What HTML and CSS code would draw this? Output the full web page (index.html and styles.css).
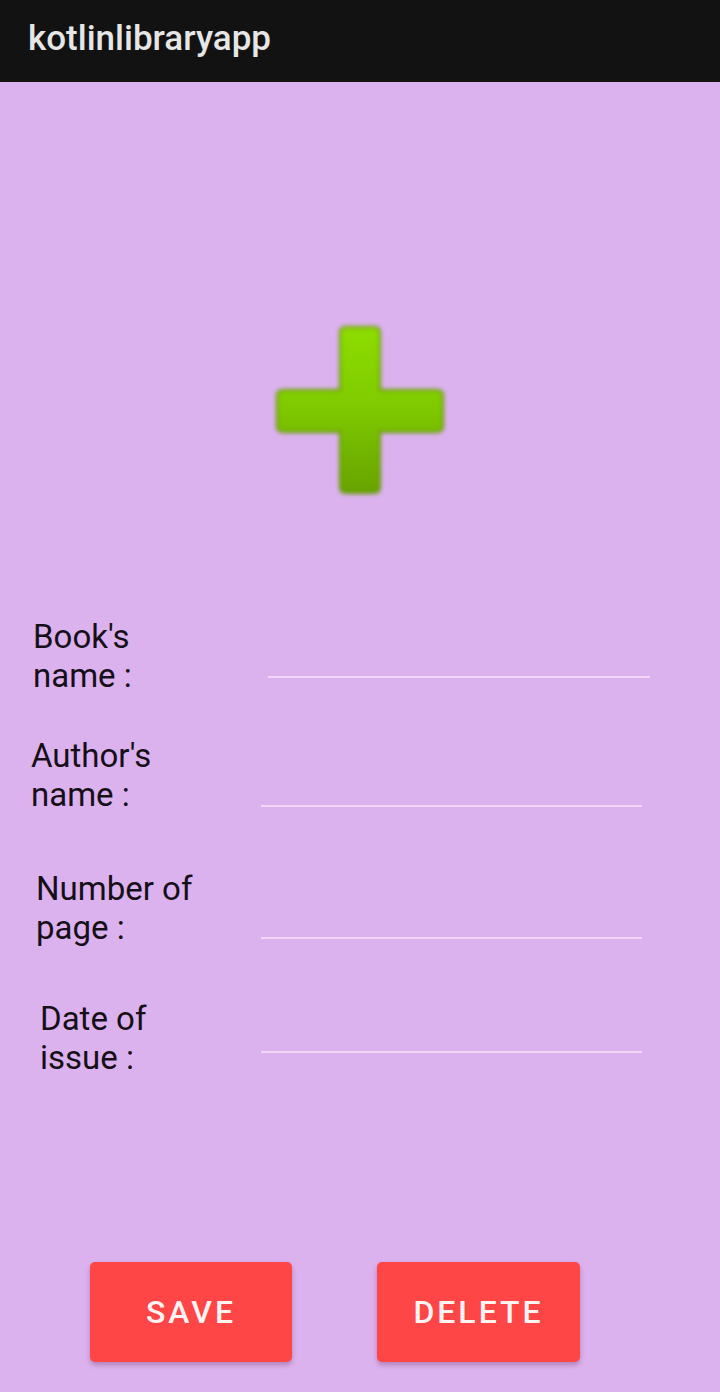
FILE: index.html
```html
<!DOCTYPE html>
<html lang="en">
<head>
<meta charset="utf-8">
<title>kotlinlibraryapp</title>
<link rel="stylesheet" href="styles.css">
</head>
<body>
<header class="appbar">kotlinlibraryapp</header>
<main class="screen">
  <div class="hero">
    <svg class="plus" width="180" height="180" viewBox="0 0 180 180" aria-hidden="true">
      <defs>
        <linearGradient id="g" x1="0" y1="0" x2="0" y2="180" gradientUnits="userSpaceOnUse">
          <stop offset="0" stop-color="#8fde00"/>
          <stop offset="0.45" stop-color="#80cc00"/>
          <stop offset="1" stop-color="#66a000"/>
        </linearGradient>
        <filter id="b" x="-10%" y="-10%" width="120%" height="120%">
          <feGaussianBlur stdDeviation="2.3"/>
        </filter>
      </defs>
      <path filter="url(#b)" fill="url(#g)" stroke="#5f9400" stroke-width="2" d="M76,7 H104 Q110,7 110,13 V70 H167 Q173,70 173,76 V106 Q173,112 167,112 H110 V167 Q110,173 104,173 H76 Q70,173 70,167 V112 H13 Q7,112 7,106 V76 Q7,70 13,70 H70 V13 Q70,7 76,7 Z"/>
    </svg>
  </div>

  <div class="form">
    <div class="row row-book">
      <label class="label">Book's<br>name :</label>
      <div class="field"></div>
    </div>
    <div class="row row-author">
      <label class="label">Author's<br>name :</label>
      <div class="field"></div>
    </div>
    <div class="row row-pages">
      <label class="label">Number of<br>page :</label>
      <div class="field"></div>
    </div>
    <div class="row row-date">
      <label class="label">Date of<br>issue :</label>
      <div class="field"></div>
    </div>
  </div>

  <div class="actions">
    <button class="btn btn-save">SAVE</button>
    <button class="btn btn-delete">DELETE</button>
  </div>
</main>
</body>
</html>
```

FILE: styles.css
```css
* { box-sizing: border-box; }

html, body {
  margin: 0;
  padding: 0;
}

body {
  width: 720px;
  height: 1392px;
  overflow: hidden;
  background: #dcb2ee;
  font-family: Roboto, "Noto Sans", "Liberation Sans", sans-serif;
}

.appbar {
  height: 82px;
  background: #121212;
  color: #e6e6e6;
  font-size: 35px;
  font-weight: 500;
  display: flex;
  align-items: center;
  padding-left: 28px;
  padding-bottom: 6px;
}

.screen {
  height: 1310px;
  display: flex;
  flex-direction: column;
}

.hero {
  display: flex;
  justify-content: center;
  padding-top: 238px;
}

.plus {
  display: block;
}

.form {
  margin-top: 117px;
  display: flex;
  flex-direction: column;
}

.row {
  display: grid;
  grid-template-columns: 261px 381px;
  align-items: start;
}

.label {
  font-size: 33px;
  line-height: 39px;
  color: #151018;
}

.field {
  border-bottom: 2px solid #f2d6f6;
}

.row-book {
  grid-template-columns: 268px 382px;
}
.row-book .label { padding-left: 33px; }
.row-book .field { height: 61px; }

.row-author { margin-top: 41px; }
.row-author .label { padding-left: 31px; }
.row-author .field { height: 71px; }

.row-pages { margin-top: 55px; }
.row-pages .label { padding-left: 36px; }
.row-pages .field { height: 70px; }

.row-date { margin-top: 52px; }
.row-date .label { padding-left: 40px; }
.row-date .field { height: 54px; }

.actions {
  margin-top: auto;
  display: flex;
  gap: 85px;
  padding-left: 90px;
  padding-bottom: 30px;
}

.btn {
  height: 100px;
  border: none;
  border-radius: 5px;
  background: #ff4646;
  color: #fff4f4;
  font-family: Roboto, "Noto Sans", "Liberation Sans", sans-serif;
  font-size: 32px;
  font-weight: 500;
  letter-spacing: 3px;
  box-shadow: 0 3px 5px rgba(80, 20, 60, 0.3);
  padding: 0;
}

.btn-save { width: 202px; }
.btn-delete { width: 203px; }
```
